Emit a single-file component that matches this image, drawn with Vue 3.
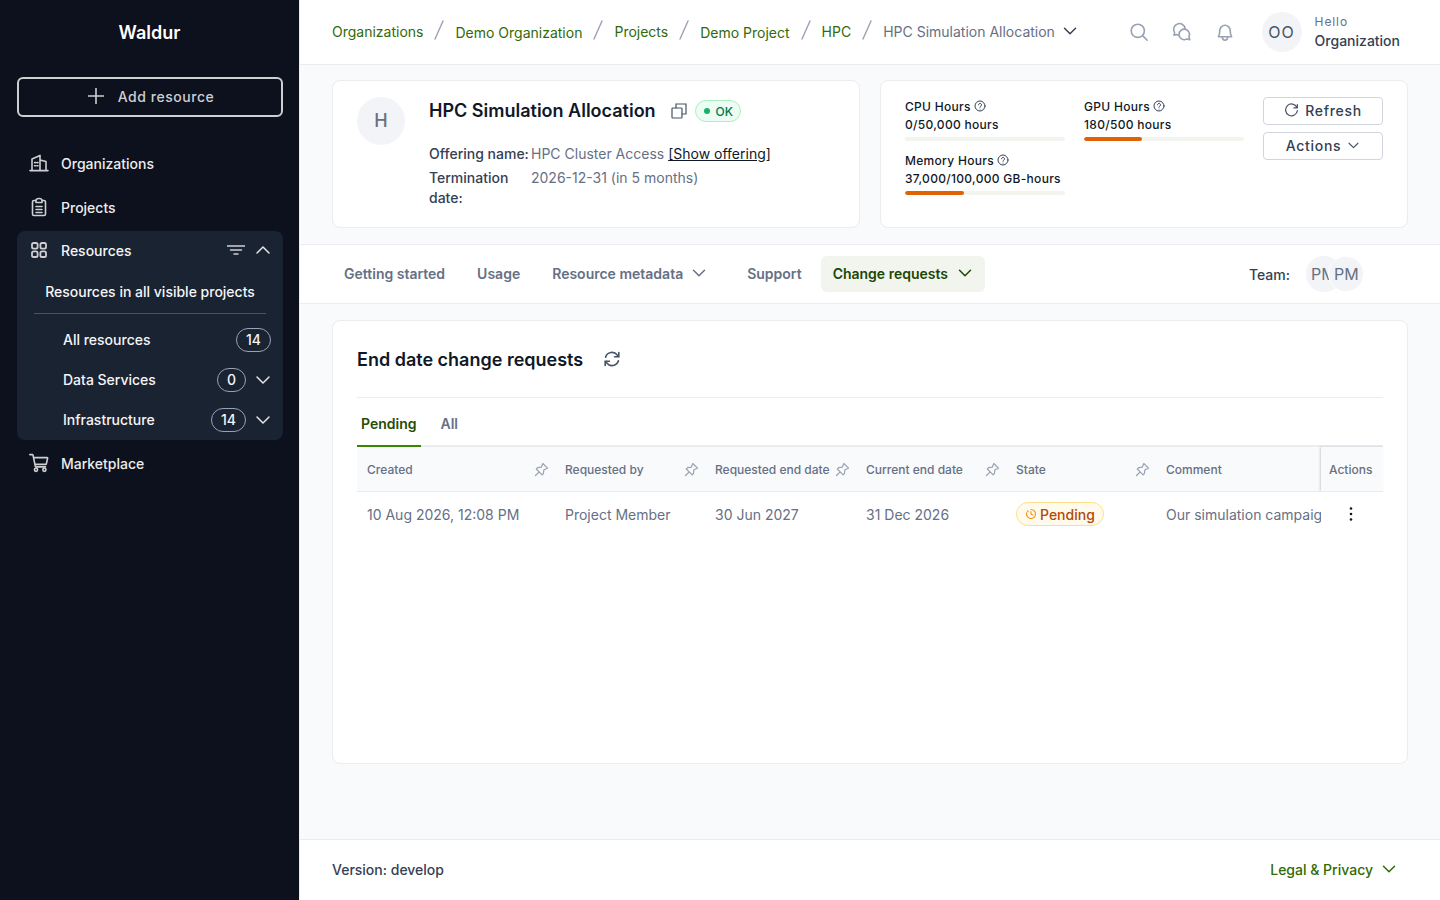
<template>
  <div class="layout">
    <aside class="sidebar">
      <div class="brand">Waldur</div>
      <button class="add-btn">
        <svg class="plus" viewBox="0 0 16 16"><path d="M8 0.5v15M0.5 8h15" /></svg>
        <span>Add resource</span>
      </button>
      <nav class="side-nav">
        <a class="side-item">
          <svg class="side-icon" viewBox="0 0 20 20"><path d="M1 17.6h18M3 17.6V6l8-3.6v15.2M11 7l6 1.5v9.100M5.600 9.600h1M8 9.600h1M5.600 12.800h1M8 12.800h1" /></svg>
          Organizations
        </a>
        <a class="side-item">
          <svg class="side-icon" viewBox="0 0 20 20"><path d="M7 3.500H5c-.8 0-1.500.7-1.500 1.500v12c0 .8.7 1.500 1.500 1.500h10c.8 0 1.500-.7 1.500-1.500V5c0-.8-.7-1.500-1.500-1.500h-2M7 5.500v-2c0-1.200 1.200-2 3-2s3 .8 3 2v2zM7 9.500h6M7 12.500h6M7 15.500h6" /></svg>
          Projects
        </a>
        <div class="side-group">
          <div class="group-head">
            <svg class="side-icon heavy" viewBox="0 0 20 20"><rect x="3" y="3" width="5.600" height="5.600" rx="1.600" /><rect x="11.400" y="3" width="5.600" height="5.600" rx="1.600" /><rect x="3" y="11.400" width="5.600" height="5.600" rx="1.600" /><rect x="11.400" y="11.400" width="5.600" height="5.600" rx="1.600" /></svg>
            <span class="grow">Resources</span>
            <svg class="filter" viewBox="0 0 18 10"><path d="M0 1h18M3.500 5h11M7 9h4" /></svg>
            <svg class="caret" viewBox="0 0 16 16"><path d="M2 11l6-6 6 6" /></svg>
          </div>
          <div class="group-scope">Resources in all visible projects</div>
          <div class="group-rule"></div>
          <div v-for="item in resourceItems" :key="item.name" class="group-row">
            <span class="grow label">{{ item.name }}</span>
            <span class="count" :class="{ shifted: item.expand }">{{ item.count }}</span>
            <svg v-if="item.expand" class="caret" viewBox="0 0 16 16"><path d="M2 5l6 6 6-6" /></svg>
          </div>
        </div>
        <a class="side-item market">
          <svg class="side-icon" viewBox="0 0 20 20"><path d="M0.800 1.600h2.400c.4 0 .7.2.8.6l2.300 11c.1.4.4.7.8.7h9.400M4.500 4.600h13.600c.4 0 .6.3.5.7l-1.200 5.400c-.1.4-.4.7-.8.7H6" /><circle cx="7" cy="16.800" r="1.600" /><circle cx="15.400" cy="16.800" r="1.600" /></svg>
          Marketplace
        </a>
      </nav>
    </aside>

    <div class="main">
      <header class="topbar">
        <nav class="crumbs">
          <template v-for="(c, i) in crumbs" :key="c">
            <a class="crumb" :class="{ low: i % 2 === 1 }">{{ c }}</a>
            <svg class="slash" viewBox="0 0 10 20"><path d="M9 1L1 19" /></svg>
          </template>
          <span class="crumb-current">HPC Simulation Allocation</span>
          <svg class="crumb-caret" viewBox="0 0 16 16"><path d="M2.500 5.200L8 10.700l5.500-5.500" /></svg>
        </nav>
        <div class="top-icons">
          <svg class="top-icon" viewBox="0 0 20 20"><circle cx="8.800" cy="8.800" r="6.600" /><path d="M13.600 13.600l4.600 4.600" /></svg>
          <svg class="top-icon" viewBox="0 0 20 20"><path d="M13.200 6.800A5.800 5.800 0 1 0 2.600 10.600L2 13.200l2.600-.7c.8.500 1.600.7 2.500.8" /><path d="M7.100 12.200a5.200 5.200 0 1 1 9.800 2.600l.9 3-3-.8a5.200 5.200 0 0 1-7.700-4.800z" /></svg>
          <svg class="top-icon" viewBox="0 0 20 20"><path d="M3.400 14.800c.9-1.400 1.400-3 1.400-6.300a5.200 5.200 0 0 1 10.400 0c0 3.300.5 4.900 1.400 6.300zM7.400 14.800v.8a2.600 2.600 0 0 0 5.200 0v-.8" /></svg>
        </div>
        <div class="user">
          <div class="user-avatar">OO</div>
          <div class="user-text">
            <div class="hello">Hello</div>
            <div class="org">Organization</div>
          </div>
        </div>
      </header>

      <div class="summary">
        <section class="card res-card">
          <div class="avatar">H</div>
          <div class="res-body">
            <div class="res-title">
              <h1>HPC Simulation Allocation</h1>
              <svg class="copy" viewBox="0 0 16 16"><rect x="1" y="5" width="10" height="10" rx="0.800" /><path d="M5 5V1h10v10h-4" /></svg>
              <span class="ok"><i></i>OK</span>
            </div>
            <dl class="fields">
              <dt>Offering name:</dt>
              <dd>HPC Cluster Access <a>[Show offering]</a></dd>
              <dt class="wrap">Termination date:</dt>
              <dd>2026-12-31 (in 5 months)</dd>
            </dl>
          </div>
        </section>
        <section class="card quota-card">
          <div class="quotas">
            <div v-for="q in quotas" :key="q.name" class="quota">
              <div class="quota-name">
                {{ q.name }}
                <svg class="help" viewBox="0 0 12 12"><circle cx="6" cy="6" r="5" /><path d="M4.500 4.800a1.500 1.500 0 1 1 2.300 1.300c-.5.300-.8.600-.8 1.100" /><circle class="dot" cx="6" cy="8.900" r="0.500" /></svg>
              </div>
              <div class="quota-value">{{ q.value }}</div>
              <div class="track"><div class="fill" :style="{ width: q.percent + '%' }"></div></div>
            </div>
          </div>
          <div class="quota-actions">
            <button class="btn">
              <svg class="btn-icon" viewBox="0 0 16 16"><path d="M13.800 4.800A6.300 6.300 0 1 0 14.300 8M14.200 1.600v3.600h-3.600" /></svg>
              <span>Refresh</span>
            </button>
            <button class="btn">
              <span>Actions</span>
              <svg class="btn-caret" viewBox="0 0 16 16"><path d="M2.500 5.200L8 10.700l5.500-5.500" /></svg>
            </button>
          </div>
        </section>
      </div>

      <div class="tabbar">
        <a class="tab">Getting started</a>
        <a class="tab">Usage</a>
        <a class="tab meta">Resource metadata
          <svg class="tab-caret" viewBox="0 0 16 16"><path d="M2.500 5.200L8 10.700l5.500-5.500" /></svg>
        </a>
        <a class="tab support">Support</a>
        <a class="tab active">Change requests
          <svg class="tab-caret" viewBox="0 0 16 16"><path d="M2.500 5.200L8 10.700l5.500-5.500" /></svg>
        </a>
        <div class="team">
          <span>Team:</span>
          <div class="team-stack">
            <div class="team-avatar">PM</div>
            <div class="team-avatar over">PM</div>
          </div>
        </div>
      </div>

      <div class="content">
        <section class="card requests">
          <div class="req-head">
            <h2>End date change requests</h2>
            <svg class="sync" viewBox="0 0 16 16"><path d="M1.600 6.200A6.600 6.600 0 0 1 13.200 4l1.600 1.800M14.400 9.800A6.600 6.600 0 0 1 2.800 12l-1.600-1.800M14.800 1.600v4.200h-4.200M1.200 14.400v-4.200h4.200" /></svg>
          </div>
          <div class="sub-tabs">
            <a class="sub-tab on">Pending</a>
            <a class="sub-tab">All</a>
          </div>
          <table class="grid">
            <colgroup>
              <col style="width:198px" /><col style="width:150px" /><col style="width:151px" /><col style="width:150px" /><col style="width:150px" /><col /><col style="width:62px" />
            </colgroup>
            <thead>
              <tr>
                <th v-for="h in columns" :key="h">
                  <div class="th-in">
                    <span>{{ h }}</span>
                    <svg class="pin" viewBox="0 0 16 16"><path d="M9.800 1.500l4.700 4.700-1 .5-2.600 1.100-.5 3.700-1.300 1.300-2.900-2.900-3.700 3.600 3.700-3.600-2.900-2.900 1.300-1.300 3.700-.5 1.100-2.700z" /></svg>
                  </div>
                </th>
                <th class="th-comment">Comment</th>
                <th class="sticky">Actions</th>
              </tr>
            </thead>
            <tbody>
              <tr>
                <td>10 Aug 2026, 12:08 PM</td>
                <td>Project Member</td>
                <td>30 Jun 2027</td>
                <td>31 Dec 2026</td>
                <td>
                  <span class="state">
                    <svg class="state-icon" viewBox="0 0 12 12"><path d="M6 1.500a4.500 4.500 0 1 1-4.300 3.200M6 3.500V6l1.800 1M2.400 2.800l.8.800" /></svg>
                    Pending
                  </span>
                </td>
                <td class="comment">Our simulation campaign</td>
                <td class="sticky dots-cell">
                  <svg class="dots" viewBox="0 0 4 16"><circle cx="2" cy="2.500" r="1.300" /><circle cx="2" cy="8" r="1.300" /><circle cx="2" cy="13.500" r="1.300" /></svg>
                </td>
              </tr>
            </tbody>
          </table>
        </section>
      </div>

      <footer class="footer">
        <span>Version: develop</span>
        <a class="legal">Legal &amp; Privacy
          <svg class="tab-caret" viewBox="0 0 16 16"><path d="M2.500 5.200L8 10.700l5.500-5.500" /></svg>
        </a>
      </footer>
    </div>
  </div>
</template>

<script setup>
const crumbs = ['Organizations', 'Demo Organization', 'Projects', 'Demo Project', 'HPC']

const resourceItems = [
  { name: 'All resources', count: 14, expand: false },
  { name: 'Data Services', count: 0, expand: true },
  { name: 'Infrastructure', count: 14, expand: true }
]

const quotas = [
  { name: 'CPU Hours', value: '0/50,000 hours', percent: 0 },
  { name: 'GPU Hours', value: '180/500 hours', percent: 36 },
  { name: 'Memory Hours', value: '37,000/100,000 GB-hours', percent: 37 }
]

const columns = ['Created', 'Requested by', 'Requested end date', 'Current end date', 'State']
</script>

<style>
html,
body {
  margin: 0;
  background: #f9fafb;
}
</style>

<style scoped>
* {
  box-sizing: border-box;
}

svg {
  display: block;
  flex: none;
  fill: none;
  stroke: currentColor;
  stroke-linecap: round;
  stroke-linejoin: round;
}

.layout {
  display: flex;
  height: 900px;
  overflow: hidden;
  font-family: Inter, "Liberation Sans", sans-serif;
  font-size: 14px;
  color: #101828;
}

.sidebar {
  width: 299px;
  flex: none;
  background: #0c111d;
  padding: 0 17px;
  color: #f5f5f6;
}

.brand {
  height: 65px;
  line-height: 65px;
  text-align: center;
  font-size: 18px;
  font-weight: 600;
  color: #fff;
}

.add-btn {
  width: 266px;
  height: 40px;
  margin-top: 12px;
  padding: 0 0 2px 2px;
  display: flex;
  align-items: center;
  justify-content: center;
  gap: 14px;
  background: transparent;
  border: 2px solid #cecfd2;
  border-radius: 6px;
  color: #cecfd2;
  font: 500 14px Inter, sans-serif;
  letter-spacing: 0.55px;
}

.plus {
  width: 16px;
  height: 16px;
  stroke-width: 1.6;
}

.side-nav {
  margin-top: 24px;
}

.side-item {
  display: flex;
  align-items: center;
  gap: 12px;
  height: 44px;
  padding-left: 12px;
  font-weight: 500;
  color: #ececed;
}

.side-item + .side-item {
  margin-bottom: 2px;
}

.market {
  height: 46px;
}

.side-icon {
  width: 20px;
  height: 20px;
  stroke-width: 1.6;
  color: #cecfd2;
}

.side-icon.heavy {
  stroke-width: 1.8;
}

.side-group {
  width: 266px;
  height: 209px;
  background: #1a2332;
  border-radius: 8px;
}

.group-head {
  display: flex;
  align-items: center;
  gap: 12px;
  height: 38px;
  padding: 0 12px;
  font-weight: 500;
}

.grow {
  flex: 1;
}

.filter {
  width: 18px;
  height: 10px;
  margin-right: -2px;
  stroke-width: 1.5;
  color: #cecfd2;
}

.caret {
  width: 16px;
  height: 16px;
  stroke-width: 1.5;
  color: #e5e5e6;
}

.group-scope {
  height: 42px;
  margin-top: 2px;
  line-height: 42px;
  text-align: center;
  font-weight: 500;
}

.group-rule {
  height: 1px;
  margin: 0 17px 6px;
  background: #475467;
}

.group-row {
  display: flex;
  align-items: center;
  height: 40px;
  padding: 0 12px 0 46px;
  font-weight: 500;
}

.label {
  padding-bottom: 2px;
}

.count {
  height: 24px;
  padding: 0 9px;
  border: 1px solid #98a2b3;
  border-radius: 12px;
  line-height: 22px;
  text-align: center;
}

.count.shifted {
  margin-right: 9px;
}

.main {
  flex: 1;
  min-width: 0;
  display: flex;
  flex-direction: column;
  border-left: 1px solid #eaecf0;
}

.topbar {
  height: 65px;
  flex: none;
  display: flex;
  align-items: center;
  padding: 0 40px 0 32px;
  background: #fff;
  border-bottom: 1px solid #eaecf0;
}

.crumbs {
  display: flex;
  align-items: center;
  margin-top: -2px;
}

.crumb {
  color: #326a07;
}

.crumb.low {
  margin-top: 2px;
}

.slash {
  width: 10px;
  height: 20px;
  margin: -2px 11px 0 11px;
  color: #98a2b3;
  stroke-width: 1.4;
}

.crumb-current {
  color: #667085;
}

.crumb-caret {
  width: 16px;
  height: 16px;
  margin-left: 7px;
  stroke-width: 1.5;
  color: #344054;
}

.top-icons {
  margin-left: auto;
  display: flex;
  gap: 23px;
  color: #98a2b3;
}

.top-icon {
  width: 20px;
  height: 20px;
  stroke-width: 1.6;
}

.user {
  display: flex;
  align-items: center;
  gap: 13px;
  margin-left: 27px;
}

.user-avatar {
  width: 40px;
  height: 40px;
  border-radius: 50%;
  background: #f2f4f7;
  color: #475467;
  display: flex;
  align-items: center;
  justify-content: center;
  font-size: 16px;
  letter-spacing: 1px;
}

.hello {
  font-size: 12px;
  line-height: 18px;
  color: #667085;
  letter-spacing: 0.9px;
}

.org {
  font-size: 14px;
  line-height: 20px;
  color: #344054;
  font-weight: 500;
}

.summary {
  display: flex;
  gap: 20px;
  padding: 15px 32px 16px;
  border-bottom: 1px solid #eaecf0;
}

.card {
  background: #fff;
  border: 1px solid #eaecf0;
  border-radius: 8px;
}

.res-card {
  width: 528px;
  height: 148px;
  display: flex;
  padding: 16px 24px;
  gap: 24px;
}

.avatar {
  width: 48px;
  height: 48px;
  padding-bottom: 2px;
  border-radius: 50%;
  background: #f2f4f7;
  color: #667085;
  display: flex;
  align-items: center;
  justify-content: center;
  font-size: 18px;
  font-weight: 500;
  flex: none;
}

.res-title {
  display: flex;
  align-items: center;
  height: 28px;
}

.res-title h1 {
  margin: 0;
  font-size: 18px;
  line-height: 28px;
  font-weight: 600;
  color: #101828;
}

.copy {
  width: 16px;
  height: 16px;
  margin-left: 15px;
  stroke-width: 1.2;
  stroke-linejoin: miter;
  color: #475467;
}

.ok {
  display: flex;
  align-items: center;
  gap: 6px;
  height: 22px;
  margin-left: 8px;
  padding: 0 7px 0 8px;
  background: #ecfdf3;
  border: 1px solid #abefc6;
  border-radius: 11px;
  font-size: 12px;
  font-weight: 500;
  color: #067647;
}

.ok i {
  width: 6px;
  height: 6px;
  border-radius: 50%;
  background: #17b26a;
}

.fields {
  display: grid;
  grid-template-columns: 100px 1fr;
  column-gap: 2px;
  row-gap: 4px;
  margin: 19px 0 0;
  line-height: 20px;
}

.fields dt {
  font-weight: 500;
  color: #344054;
  white-space: nowrap;
}

.fields dt.wrap {
  white-space: normal;
}

.fields dd {
  margin: 0;
  color: #667085;
}

.fields a {
  color: #101828;
  text-decoration: underline;
}

.quota-card {
  width: 528px;
  height: 148px;
  display: flex;
  padding: 16px 24px;
}

.quotas {
  width: 340px;
  display: grid;
  grid-template-columns: 160px 160px;
  column-gap: 19px;
  row-gap: 11px;
  align-content: start;
  padding-top: 1px;
}

.quota-name {
  display: flex;
  align-items: center;
  gap: 3px;
  font-size: 12px;
  line-height: 18px;
  font-weight: 500;
  letter-spacing: 0.3px;
  color: #101828;
}

.help {
  width: 12px;
  height: 12px;
  stroke-width: 1;
  margin-top: -3px;
  color: #344054;
}

.help .dot {
  fill: currentColor;
  stroke: none;
}

.quota-value {
  font-size: 12px;
  line-height: 18px;
  font-weight: 500;
  letter-spacing: 0.3px;
  color: #101828;
}

.track {
  height: 4px;
  margin-top: 3px;
  background: #f1f5ee;
  border-radius: 2px;
  overflow: hidden;
}

.fill {
  height: 100%;
  background: #e06205;
  border-radius: 2px;
}

.quota-actions {
  margin-left: auto;
  display: flex;
  flex-direction: column;
  gap: 7px;
}

.btn {
  width: 120px;
  height: 28px;
  padding: 0 0 2px;
  display: flex;
  align-items: center;
  justify-content: center;
  gap: 6px;
  background: #fff;
  border: 1px solid #d0d5dd;
  border-radius: 4px;
  color: #344054;
  font: 500 14px Inter, sans-serif;
  letter-spacing: 0.7px;
}

.btn-icon {
  width: 15px;
  height: 15px;
  stroke-width: 1.3;
  color: #475467;
}

.btn-caret {
  width: 13px;
  height: 13px;
  stroke-width: 1.4;
  color: #475467;
}

.tabbar {
  height: 59px;
  flex: none;
  display: flex;
  align-items: center;
  padding: 0 0 0 32px;
  background: #fff;
  border-bottom: 1px solid #eaecf0;
  font-weight: 600;
  color: #667085;
}

.tab {
  display: flex;
  align-items: center;
  height: 36px;
  padding: 0 12px 2px;
  margin-right: 8px;
  border-radius: 6px;
}

.tab-caret {
  width: 16px;
  height: 16px;
  margin-left: 8px;
  stroke-width: 1.5;
}

.meta {
  margin-right: 16px;
}

.support {
  margin-right: 7px;
}

.active {
  padding-right: 12px;
  background: #f1f5ee;
  color: #1e4604;
}

.active .tab-caret {
  margin-left: 9px;
}

.team {
  margin-left: auto;
  margin-right: 76px;
  display: flex;
  align-items: center;
  gap: 16px;
  color: #344054;
  font-weight: 500;
}

.team-stack {
  display: flex;
}

.team-avatar {
  width: 36px;
  height: 36px;
  border-radius: 50%;
  background: #f2f4f7;
  color: #667085;
  font-size: 16px;
  font-weight: 400;
  line-height: 36px;
  padding-left: 5px;
  overflow: hidden;
  white-space: nowrap;
}

.team-avatar.over {
  margin-left: -14px;
  border: 1px solid #fff;
  line-height: 34px;
  position: relative;
}

.content {
  flex: 1;
  padding: 16px 32px 0;
}

.requests {
  height: 444px;
  padding: 0 24px;
}

.req-head {
  display: flex;
  align-items: center;
  height: 77px;
  border-bottom: 1px solid #eaecf0;
}

.req-head h2 {
  margin: 0;
  padding-top: 2px;
  font-size: 18px;
  line-height: 28px;
  font-weight: 600;
  color: #101828;
}

.sync {
  width: 16px;
  height: 16px;
  margin-left: 21px;
  stroke-width: 1.6;
  color: #475467;
}

.sub-tabs {
  display: flex;
  height: 50px;
  margin-top: -1px;
  padding-top: 1px;
  border-bottom: 2px solid #eaecf0;
  font-weight: 600;
  color: #667085;
}

.sub-tab {
  height: 49px;
  padding: 17px 4px 0;
  margin-right: 16px;
}

.sub-tab.on {
  color: #264d05;
  border-bottom: 2px solid #3a8500;
}

.grid {
  width: 100%;
  table-layout: fixed;
  border-collapse: collapse;
}

.grid th {
  height: 44px;
  padding: 2px 10px 0;
  background: #f9fafb;
  border-bottom: 1px solid #eaecf0;
  text-align: left;
  font-size: 12px;
  font-weight: 500;
  color: #667085;
}

.th-in {
  display: flex;
  align-items: center;
  justify-content: space-between;
}

.pin {
  width: 16px;
  height: 16px;
  margin-right: -4px;
  stroke-width: 1.2;
  color: #98a2b3;
}

.grid td {
  height: 44px;
  padding: 2px 10px 0;
  color: #667085;
  white-space: nowrap;
  overflow: hidden;
}

.grid td.comment {
  padding-right: 0;
}

.grid .sticky {
  padding: 2px 10px 0 8px;
  box-shadow: -1px 0 2px rgba(16, 24, 40, 0.18);
}

.grid td.sticky {
  background: #fff;
}

.dots {
  width: 4px;
  height: 16px;
  margin: 0 auto;
  fill: #101828;
  stroke: none;
}

.state {
  display: inline-flex;
  align-items: center;
  gap: 3px;
  height: 24px;
  padding: 0 8px;
  background: #fffaeb;
  border: 1px solid #fedf89;
  border-radius: 12px;
  color: #b54708;
  font-weight: 500;
}

.state-icon {
  width: 12px;
  height: 12px;
  stroke-width: 1.1;
  color: #f79009;
}

.footer {
  height: 61px;
  flex: none;
  display: flex;
  align-items: center;
  justify-content: space-between;
  padding: 0 43px 2px 32px;
  background: #fff;
  border-top: 1px solid #eaecf0;
  color: #344054;
  font-weight: 500;
}

.legal {
  display: flex;
  align-items: center;
  color: #326a07;
}
</style>
